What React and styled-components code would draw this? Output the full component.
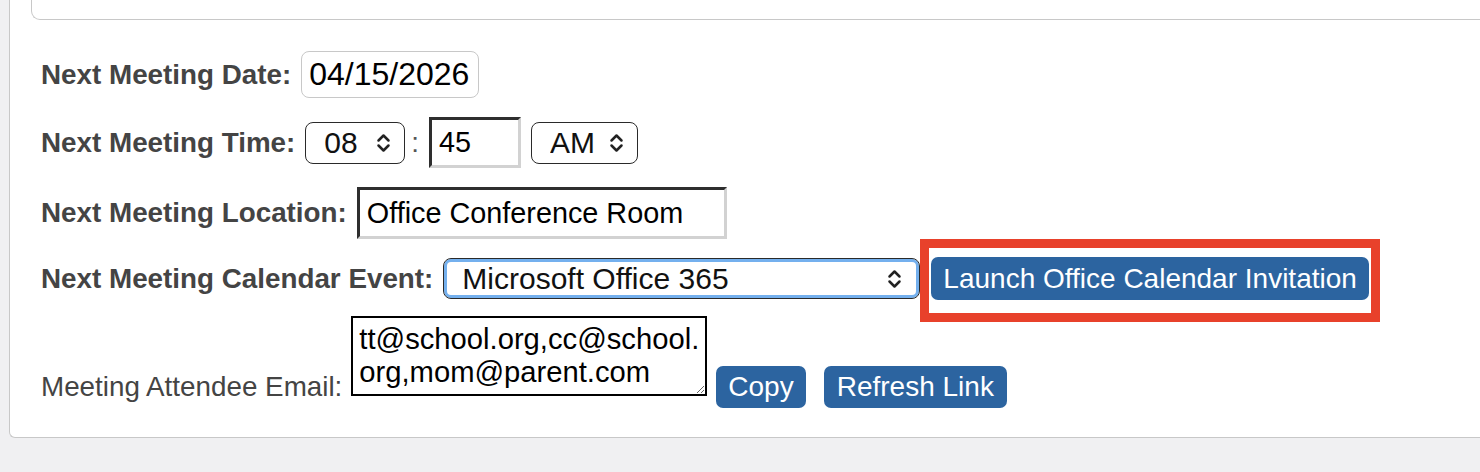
import styled, { createGlobalStyle } from 'styled-components';

const GlobalStyle = createGlobalStyle`
  html, body {
    margin: 0;
    padding: 0;
    background: #f0f0f2;
    overflow: hidden;
  }
  body {
    font-family: "Liberation Sans", Arial, Helvetica, sans-serif;
  }
`;

const Page = styled.div`
  width: 1480px;
  height: 472px;
  padding-left: 9px;
  box-sizing: border-box;
`;

const Panel = styled.div`
  background: #fff;
  border-left: 1.5px solid #c8c8c8;
  border-bottom: 1.5px solid #c8c8c8;
  border-bottom-left-radius: 6px;
  padding: 0 0 29px 31px;
`;

const TopBox = styled.div`
  height: 19px;
  margin-left: -10px;
  border-left: 1.5px solid #c8c8c8;
  border-bottom: 1.5px solid #c8c8c8;
  border-bottom-left-radius: 9px;
`;

const Form = styled.div`
  display: flex;
  flex-direction: column;
`;

const Row = styled.div`
  display: flex;
  align-items: ${p => p.$align || 'center'};
  gap: ${p => p.$gap ?? 10}px;
  margin-top: ${p => p.$top}px;
`;

const Label = styled.span`
  font-size: 27.8px;
  font-weight: ${p => (p.$plain ? 400 : 700)};
  color: #444;
  line-height: 32px;
  white-space: nowrap;
  margin-top: ${p => p.$offset || 0}px;
`;

const RoundInput = styled.input`
  box-sizing: border-box;
  width: 178px;
  height: 47px;
  padding: 0 7px;
  border: 1px solid #c8c8c8;
  border-radius: 8px;
  font: 32px "Liberation Sans", Arial, sans-serif;
  color: #000;
  background: #fff;
  outline: none;
`;

const InsetInput = styled.input`
  box-sizing: border-box;
  width: ${p => p.$w}px;
  height: ${p => p.$h}px;
  padding: 0 7px;
  border-style: solid;
  border-width: 3px;
  border-color: #2e2e2e #d2d2d2 #d2d2d2 #2e2e2e;
  font: 28.8px "Liberation Sans", Arial, sans-serif;
  color: #000;
  background: #fff;
  outline: none;
`;

const SelectBox = styled.div`
  box-sizing: border-box;
  display: flex;
  align-items: center;
  width: ${p => p.$w}px;
  height: ${p => p.$h || 42}px;
  border: 1.5px solid #2a2a2a;
  border-radius: 8px;
  background: #fff;
  padding-right: ${p => p.$pr || 13}px;
  box-shadow: ${p => (p.$focus ? 'inset 0 0 0 3px #74b0ee' : 'none')};
`;

const NativeSelect = styled.select`
  appearance: none;
  -webkit-appearance: none;
  flex: 1;
  min-width: 0;
  border: none;
  background: transparent;
  outline: none;
  font: 30px "Liberation Sans", Arial, sans-serif;
  color: #111;
  padding: 0 0 0 ${p => p.$pl || 18}px;
  margin: 0;
`;

const Colon = styled.span`
  font-size: 27.8px;
  color: #555;
  margin: 0 0 0 -4px;
`;

const Button = styled.button`
  box-sizing: border-box;
  height: ${p => p.$h || 42}px;
  padding: 0 ${p => p.$px || 12}px;
  border: none;
  border-radius: 7px;
  background: #2c64a0;
  color: #fff;
  font: 28px "Liberation Sans", Arial, sans-serif;
  cursor: pointer;
  white-space: nowrap;
`;

const Highlight = styled.span`
  position: relative;
  display: inline-flex;
  margin-left: 1px;

  &::after {
    content: '';
    position: absolute;
    top: -18px;
    left: -11px;
    right: -11px;
    bottom: -22px;
    border: 9px solid #e8412b;
    pointer-events: none;
  }
`;

const EmailArea = styled.textarea`
  box-sizing: border-box;
  width: 356px;
  height: 80px;
  padding: 5px 6px;
  border: 2px solid #000;
  font: 29.2px/33px "Liberation Sans", Arial, sans-serif;
  color: #000;
  outline: none;
  overflow: hidden;
  word-break: break-all;
`;

const ButtonGroup = styled.div`
  display: flex;
  gap: 18px;
  margin-top: 50px;
`;

const Chevrons = () => (
  <svg width="15" height="22" viewBox="0 0 15 22" fill="none" stroke="#222" strokeWidth="2.5" strokeLinecap="round" strokeLinejoin="round">
    <path d="M2.5 8.5 L7.5 3.5 L12.5 8.5" />
    <path d="M2.5 13.5 L7.5 18.5 L12.5 13.5" />
  </svg>
);

export default function App() {
  return (
    <Page>
      <GlobalStyle />
      <Panel>
        <TopBox />
        <Form>
          <Row $top={31}>
            <Label>Next Meeting Date:</Label>
            <RoundInput type="text" defaultValue="04/15/2026" />
          </Row>

          <Row $top={19}>
            <Label>Next Meeting Time:</Label>
            <SelectBox $w={100}>
              <NativeSelect defaultValue="08">
                <option>08</option>
              </NativeSelect>
              <Chevrons />
            </SelectBox>
            <Colon>:</Colon>
            <InsetInput type="text" defaultValue="45" $w={92} $h={51} />
            <SelectBox $w={107}>
              <NativeSelect defaultValue="AM">
                <option>AM</option>
                <option>PM</option>
              </NativeSelect>
              <Chevrons />
            </SelectBox>
          </Row>

          <Row $top={19}>
            <Label>Next Meeting Location:</Label>
            <InsetInput type="text" defaultValue="Office Conference Room" $w={370} $h={52} />
          </Row>

          <Row $top={18}>
            <Label>Next Meeting Calendar Event:</Label>
            <SelectBox $w={477} $h={41} $pr={17} $focus>
              <NativeSelect defaultValue="Microsoft Office 365">
                <option>Microsoft Office 365</option>
              </NativeSelect>
              <Chevrons />
            </SelectBox>
            <Highlight>
              <Button $h={43}>Launch Office Calendar Invitation</Button>
            </Highlight>
          </Row>

          <Row $top={16} $align="flex-start" $gap={9}>
            <Label $plain $offset={55}>Meeting Attendee Email:</Label>
            <EmailArea defaultValue="tt@school.org,cc@school.org,mom@parent.com" />
            <ButtonGroup>
              <Button>Copy</Button>
              <Button $px={13}>Refresh Link</Button>
            </ButtonGroup>
          </Row>
        </Form>
      </Panel>
    </Page>
  );
}
